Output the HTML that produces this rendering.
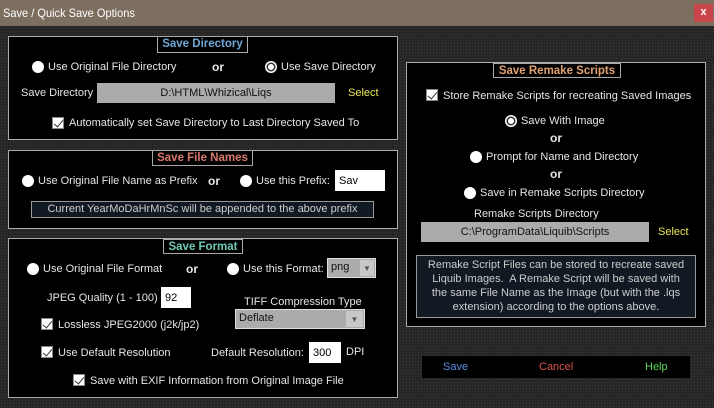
<!DOCTYPE html>
<html><head><style>
*{margin:0;padding:0;box-sizing:border-box}
body{width:714px;height:408px;background:#262626;font-family:"Liberation Sans",Arial,sans-serif;font-size:11px;color:#e6e6e6;position:relative;overflow:hidden;
background-image:radial-gradient(#3a3a3a 0.6px,transparent 0.7px);background-size:3px 3px}
.a{position:absolute;white-space:nowrap}
.title{position:absolute;left:0;top:0;width:714px;height:26px;background:#7c6f5f;color:#fff;font-size:12px;padding:6px 0 0 3px;transform-origin:0 0}
.close{position:absolute;left:694px;top:4px;width:19px;height:18px;background:#c9454a;color:#fff;font-size:11px;font-weight:bold;text-align:center;line-height:17px}
.panel{position:absolute;background:#000;border:1px solid #aaa}
.lg{position:absolute;border:1px solid #aaa;background:#000;font-weight:bold;font-size:11.5px;text-align:center;line-height:14px}
.r{position:absolute;width:12px;height:12px;border-radius:50%;background:#fff}
.r.on::after{content:"";position:absolute;left:3px;top:3px;width:6px;height:6px;border-radius:50%;background:#fff;box-shadow:0 0 0 1.5px #333}
.cb{position:absolute;width:12px;height:12px;background:#fff;border:1px solid #888}
.cb::after{content:"";position:absolute;left:3px;top:0px;width:4px;height:8px;border:solid #333;border-width:0 1.5px 1.5px 0;transform:rotate(40deg)}
.in{position:absolute;background:#fff;color:#000;padding:5px 0 0 4px;font-size:11px}
.gray{position:absolute;background:#ababab;color:#111;text-align:center;font-size:11px;line-height:20px}
.or{font-weight:bold;font-size:12px}
.y{color:#e8e85a}
</style></head><body>
<div class="title"><span style="display:inline-block;transform:scaleX(0.92);transform-origin:0 0">Save / Quick Save Options</span></div>
<div class="close">x</div>

<div class="panel" style="left:8px;top:36px;width:390px;height:104px"></div>
<div class="lg" style="left:157px;top:36px;width:91px;height:17px;color:#6ea8d8">Save Directory</div>
<div class="r" style="left:32px;top:61px"></div><div class="a" style="left:48px;top:61px">Use Original File Directory</div>
<div class="a or" style="left:212px;top:60px">or</div>
<div class="r on" style="left:265px;top:61px"></div><div class="a" style="left:281px;top:61px">Use Save Directory</div>
<div class="a" style="left:21px;top:87px">Save Directory</div>
<div class="gray" style="left:97px;top:83px;width:238px;height:20px">D:\HTML\Whizical\Liqs</div>
<div class="a y" style="left:348px;top:87px">Select</div>
<div class="cb" style="left:52px;top:117px"></div><div class="a" style="left:69px;top:117px">Automatically set Save Directory to Last Directory Saved To</div>

<div class="panel" style="left:8px;top:150px;width:390px;height:79px"></div>
<div class="lg" style="left:152px;top:150px;width:101px;height:16px;color:#d9786b">Save File Names</div>
<div class="r" style="left:22px;top:175px"></div><div class="a" style="left:38px;top:175px">Use Original File Name as Prefix</div>
<div class="a or" style="left:208px;top:174px">or</div>
<div class="r" style="left:240px;top:175px"></div><div class="a" style="left:256px;top:175px">Use this Prefix:</div>
<div class="in" style="left:335px;top:170px;width:50px;height:21px">Sav</div>
<div class="a" style="left:31px;top:201px;width:343px;height:17px;border:1px solid #999;background:#111a22;color:#ccc;text-align:center;line-height:15px">Current YearMoDaHrMnSc will be appended to the above prefix</div>

<div class="panel" style="left:8px;top:238px;width:390px;height:160px"></div>
<div class="lg" style="left:163px;top:239px;width:80px;height:15px;color:#6fc9b5">Save Format</div>
<div class="r" style="left:27px;top:263px"></div><div class="a" style="left:43px;top:263px">Use Original File Format</div>
<div class="a or" style="left:186px;top:262px">or</div>
<div class="r" style="left:227px;top:263px"></div><div class="a" style="left:243px;top:263px">Use this Format:</div>
<div class="gray" style="left:327px;top:258px;width:49px;height:20px;text-align:left;padding-left:3px;border:1px solid #ddd;line-height:17px">png<span style="position:absolute;left:32px;top:1px;width:14px;height:16px;background:#c8c8c8;font-size:8px;text-align:center;color:#555">▼</span></div>
<div class="a" style="left:47px;top:292px">JPEG Quality (1 - 100)</div>
<div class="in" style="left:161px;top:287px;width:30px;height:21px">92</div>
<div class="a" style="left:244px;top:296px">TIFF Compression Type</div>
<div class="gray" style="left:235px;top:309px;width:130px;height:20px;text-align:left;padding-left:3px;border:1px solid #ddd;line-height:17px">Deflate<span style="position:absolute;left:110px;top:1px;width:17px;height:16px;background:#c8c8c8;font-size:8px;text-align:center;color:#555">▼</span></div>
<div class="cb" style="left:41px;top:318px"></div><div class="a" style="left:58px;top:319px">Lossless JPEG2000 (j2k/jp2)</div>
<div class="cb" style="left:41px;top:346px"></div><div class="a" style="left:58px;top:347px">Use Default Resolution</div>
<div class="a" style="left:211px;top:347px">Default Resolution:</div>
<div class="in" style="left:309px;top:342px;width:32px;height:21px">300</div>
<div class="a" style="left:346px;top:346px">DPI</div>
<div class="cb" style="left:73px;top:374px"></div><div class="a" style="left:90px;top:375px">Save with EXIF Information from Original Image File</div>

<div class="panel" style="left:406px;top:62px;width:300px;height:265px"></div>
<div class="lg" style="left:493px;top:63px;width:128px;height:15px;color:#e0a070">Save Remake Scripts</div>
<div class="cb" style="left:426px;top:89px"></div><div class="a" style="left:443px;top:90px">Store Remake Scripts for recreating Saved Images</div>
<div class="r on" style="left:505px;top:115px"></div><div class="a" style="left:521px;top:115px">Save With Image</div>
<div class="a or" style="left:550px;top:131px">or</div>
<div class="r" style="left:470px;top:151px"></div><div class="a" style="left:486px;top:151px">Prompt for Name and Directory</div>
<div class="a or" style="left:550px;top:167px">or</div>
<div class="r" style="left:464px;top:187px"></div><div class="a" style="left:480px;top:187px">Save in Remake Scripts Directory</div>
<div class="a" style="left:474px;top:208px">Remake Scripts Directory</div>
<div class="gray" style="left:421px;top:222px;width:228px;height:20px">C:\ProgramData\Liquib\Scripts</div>
<div class="a" style="left:658px;top:226px;color:#e8e85a">Select</div>
<div class="a" style="left:416px;top:255px;width:280px;height:63px;border:1px solid #999;background:#111a22;color:#ccc;text-align:center;line-height:14px;padding-top:2px">Remake Script Files can be stored to recreate saved<br>Liquib Images.&nbsp; A Remake Script will be saved with<br>the same File Name as the Image (but with the .lqs<br>extension) according to the options above.</div>

<div class="a" style="left:422px;top:356px;width:268px;height:22px;background:#000"></div>
<div class="a" style="left:443px;top:361px;color:#5a8ee0">Save</div>
<div class="a" style="left:539px;top:361px;color:#d9534f">Cancel</div>
<div class="a" style="left:645px;top:361px;color:#5ad85a">Help</div>
</body></html>
